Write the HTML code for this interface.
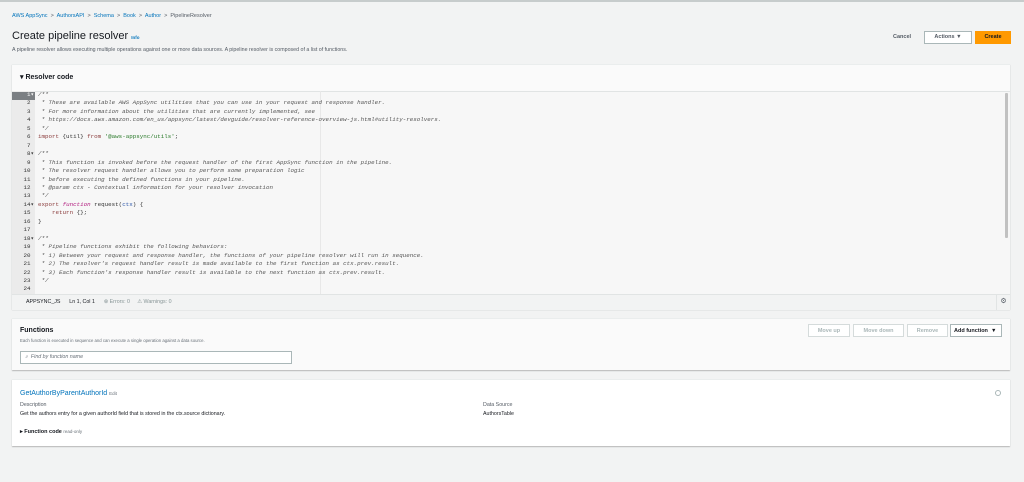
<!DOCTYPE html>
<html><head><meta charset="utf-8"><style>
*{box-sizing:border-box;margin:0;padding:0}
body{width:1024px;height:482px;background:#f2f3f3;font-family:"Liberation Sans",sans-serif;color:#16191f;position:relative;overflow:hidden;font-size:6px}
.a{position:absolute}
.link{color:#0073bb}
.panel{position:absolute;left:12px;width:998px;background:#fafafa;box-shadow:0 1px 1px rgba(0,0,0,.25);border-top:1px solid #eaeded}
.code{font-family:"Liberation Mono",monospace;font-size:5.85px;line-height:8.45px;white-space:pre;color:#333}
.c{color:#555;font-style:italic}
.k{color:#8a3b3b}
.f{color:#b0187c;font-style:italic}
.s{color:#2a7a2a}
.v{color:#2b55a8}
.btn{position:absolute;height:13px;border:1px solid #d5dbdb;background:#fff;font-size:5.5px;font-weight:bold;color:#aab7b8;text-align:center;line-height:12px}
</style></head><body>
<div class="a" style="left:0;top:0;width:1024px;height:2px;background:#c7cccc"></div>
<div class="a" style="left:12px;top:13px;font-size:5.5px;color:#545b64"><span class="link">AWS AppSync</span> &nbsp;&gt;&nbsp; <span class="link">AuthorsAPI</span> &nbsp;&gt;&nbsp; <span class="link">Schema</span> &nbsp;&gt;&nbsp; <span class="link">Book</span> &nbsp;&gt;&nbsp; <span class="link">Author</span> &nbsp;&gt;&nbsp; PipelineResolver</div>
<div class="a" style="left:12px;top:30px;font-size:11px">Create pipeline resolver <span class="link" style="font-size:4.5px;font-weight:bold">Info</span></div>
<div class="a" style="left:12px;top:47px;font-size:5.3px;color:#545b64">A pipeline resolver allows executing multiple operations against one or more data sources. A pipeline resolver is composed of a list of functions.</div>
<div class="a" style="left:893px;top:34px;font-size:5.5px;font-weight:bold;color:#545b64">Cancel</div>
<div class="a" style="left:924px;top:31px;width:48px;height:13px;border:1px solid #aab7b8;background:#fff;font-size:5.5px;font-weight:bold;color:#545b64;text-align:center;line-height:11px">Actions ▼</div>
<div class="a" style="left:975px;top:31px;width:36px;height:13px;background:#ff9900;font-size:5.5px;font-weight:bold;text-align:center;line-height:13px">Create</div>

<div class="panel" style="top:64px;height:245px">
<div class="a" style="left:8px;top:8px;font-size:7px;font-weight:bold">▾ Resolver code</div>
<div class="a" style="left:0;top:26px;width:998px;height:203px;background:#f7f7f7;border-top:1px solid #e1e4e4"></div>
<div class="a" style="left:0;top:26px;width:23px;height:203px;background:#ebebeb"></div>
<div class="a" style="left:0;top:27px;width:23px;height:8px;background:#7b7f83"></div>
<div class="a" style="left:308px;top:26px;width:1px;height:203px;background:#e8e8e8"></div>
<div class="a" style="left:993px;top:28px;width:3px;height:145px;background:#c1c1c1;border-radius:1px"></div>
<div class="a code" style="left:0;top:26px;width:22px;text-align:right;color:#333"><span style="color:#fff">1▾</span>
2 
3 
4 
5 
6 
7 
8▾
9 
10 
11 
12 
13 
14▾
15 
16 
17 
18▾
19 
20 
21 
22 
23 
24 </div>
<div class="a code" style="left:26px;top:26px"><span class="c">/**
 * These are available AWS AppSync utilities that you can use in your request and response handler.
 * For more information about the utilities that are currently implemented, see
 * https://docs.aws.amazon.com/en_us/appsync/latest/devguide/resolver-reference-overview-js.html#utility-resolvers.
 */</span>
<span class="k">import</span> {util} <span class="k">from</span> <span class="s">'@aws-appsync/utils'</span>;

<span class="c">/**
 * This function is invoked before the request handler of the first AppSync function in the pipeline.
 * The resolver request handler allows you to perform some preparation logic
 * before executing the defined functions in your pipeline.
 * @param ctx - Contextual information for your resolver invocation
 */</span>
<span class="k">export</span> <span class="f">function</span> request(<span class="v">ctx</span>) {
    <span class="k">return</span> {};
}

<span class="c">/**
 * Pipeline functions exhibit the following behaviors:
 * 1) Between your request and response handler, the functions of your pipeline resolver will run in sequence.
 * 2) The resolver's request handler result is made available to the first function as ctx.prev.result.
 * 3) Each function's response handler result is available to the next function as ctx.prev.result.
 */</span>
</div>
<div class="a" style="left:0;top:229px;width:998px;height:16px;background:#f2f3f3;border-top:1px solid #e1e4e4;font-size:5.3px;line-height:15px;color:#16191f;padding-left:14px">APPSYNC_JS &nbsp;&nbsp;&nbsp;&nbsp; Ln 1, Col 1 &nbsp;&nbsp;&nbsp;&nbsp; <span style="color:#879596">⊗ Errors: 0 &nbsp;&nbsp;&nbsp; ⚠ Warnings: 0</span></div>
<div class="a" style="left:984px;top:229px;width:14px;height:16px;border-left:1px solid #e1e4e4;font-size:7px;line-height:15px;text-align:center;color:#545b64">⚙</div>
</div>

<div class="panel" style="top:318px;height:52px">
<div class="a" style="left:8px;top:8px;font-size:7px;font-weight:bold">Functions</div>
<div class="a" style="left:8px;top:19px;font-size:4.3px;color:#687078">Each function is executed in sequence and can execute a single operation against a data source.</div>
<div class="a" style="left:8px;top:32px;width:272px;height:13px;border:1px solid #aab7b8;background:#fff;font-size:5.3px;font-style:italic;color:#687078;line-height:11px;padding-left:4px">⌕ &nbsp;Find by function name</div>
<div class="btn" style="left:796px;top:5px;width:42px">Move up</div>
<div class="btn" style="left:841px;top:5px;width:51px">Move down</div>
<div class="btn" style="left:895px;top:5px;width:41px">Remove</div>
<div class="btn" style="left:938px;top:5px;width:52px;border-color:#aab7b8;color:#16191f;text-align:left;padding-left:3px">Add function &nbsp;▼</div>
</div>

<div class="panel" style="top:379px;height:67px;background:#fff">
<div class="a link" style="left:8px;top:10px;font-size:7px">GetAuthorByParentAuthorId <span style="font-size:4.5px;color:#687078">Edit</span></div>
<div class="a" style="left:8px;top:22px;font-size:5.3px;color:#545b64">Description</div>
<div class="a" style="left:8px;top:31px;font-size:5.3px">Get the authors entry for a given authorId field that is stored in the ctx.source dictionary.</div>
<div class="a" style="left:471px;top:22px;font-size:5.3px;color:#545b64">Data Source</div>
<div class="a" style="left:471px;top:31px;font-size:5.3px">AuthorsTable</div>
<div class="a" style="left:8px;top:49px;font-size:5.5px;font-weight:bold">▸ Function code <span style="font-weight:normal;font-size:4.5px;color:#687078">read-only</span></div>
<div class="a" style="left:983px;top:10px;width:6px;height:6px;border:1px solid #aab7b8;border-radius:50%"></div>
</div>
</body></html>
